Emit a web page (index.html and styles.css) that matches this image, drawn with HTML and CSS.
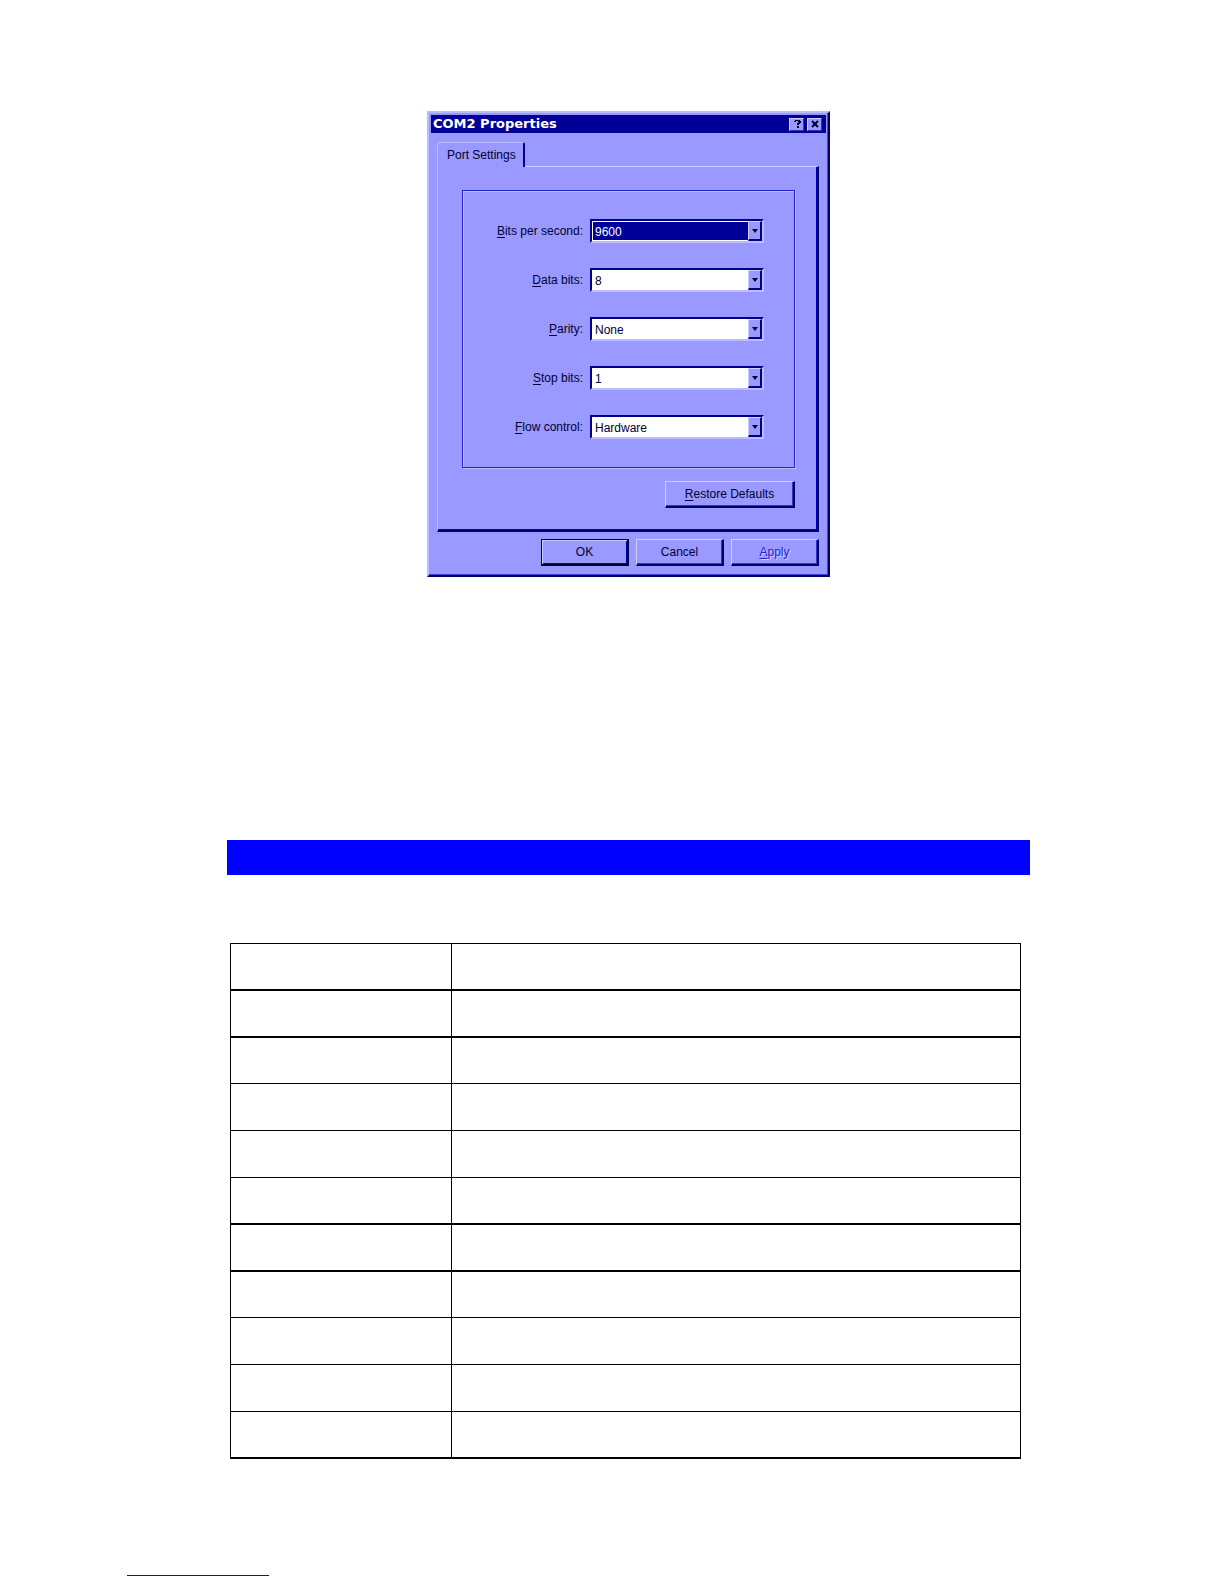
FILE: index.html
```html
<!DOCTYPE html>
<html lang="en">

<head>
    <meta charset="utf-8">
    <title>COM2 Properties</title>
    <link rel="stylesheet" href="styles.css">
</head>

<body>
    <main>
        <form class="dialog">
            <div class="title-bar">
                <h1>COM2 Properties</h1>
                <button type="button" class="title-button" aria-label="Help">
                    <svg viewBox="0 0 10 10" width="10" height="10">
                        <path d="M3 1h5v1h1v2H8v1H7v1H5V4h1V2H4v1H2V2h1zM5 7h2v2H5z" fill="#000033" />
                    </svg>
                </button>
                <button type="button" class="title-button" aria-label="Close">
                    <svg viewBox="0 0 10 10" width="10" height="10">
                        <path d="M2 2l6 6M8 2l-6 6" stroke="#000033" stroke-width="2" />
                    </svg>
                </button>
            </div>
            <div class="dialog-body">
                <button type="button" class="tab">Port Settings</button>
                <div class="panel">
                    <div class="settings">
                        <label for="bits-per-second"><u>B</u>its per second:</label>
                        <div class="combo selected">
                            <select id="bits-per-second"><option>9600</option></select>
                            <span class="arrow"></span>
                        </div>
                        <label for="data-bits"><u>D</u>ata bits:</label>
                        <div class="combo">
                            <select id="data-bits"><option>8</option></select>
                            <span class="arrow"></span>
                        </div>
                        <label for="parity"><u>P</u>arity:</label>
                        <div class="combo">
                            <select id="parity"><option>None</option></select>
                            <span class="arrow"></span>
                        </div>
                        <label for="stop-bits"><u>S</u>top bits:</label>
                        <div class="combo">
                            <select id="stop-bits"><option>1</option></select>
                            <span class="arrow"></span>
                        </div>
                        <label for="flow-control"><u>F</u>low control:</label>
                        <div class="combo">
                            <select id="flow-control"><option>Hardware</option></select>
                            <span class="arrow"></span>
                        </div>
                    </div>
                    <button type="reset" class="button restore"><u>R</u>estore Defaults</button>
                </div>
                <div class="actions">
                    <button type="submit" class="button default">OK</button>
                    <button type="button" class="button">Cancel</button>
                    <button type="button" class="button" disabled><u>A</u>pply</button>
                </div>
            </div>
        </form>

        <div class="banner"></div>

        <table class="grid">
            <tbody>
                <tr class="thick"><td></td><td></td></tr>
                <tr class="thick"><td></td><td></td></tr>
                <tr><td></td><td></td></tr>
                <tr><td></td><td></td></tr>
                <tr><td></td><td></td></tr>
                <tr class="thick"><td></td><td></td></tr>
                <tr class="thick"><td></td><td></td></tr>
                <tr><td></td><td></td></tr>
                <tr><td></td><td></td></tr>
                <tr><td></td><td></td></tr>
                <tr class="thick"><td></td><td></td></tr>
            </tbody>
        </table>
    </main>
    <footer>
        <a href="#" class="footer-link"></a>
    </footer>
</body>

</html>
```
FILE: styles.css
```css
* {
    box-sizing: border-box;
}

body {
    margin: 0;
    background-color: white;
    font-family: "Liberation Sans", Arial, sans-serif;
    font-size: 12px;
    line-height: 16px;
    color: #000033;
}

main {
    padding: 111px 194px 0 227px;
}

button,
select {
    font: inherit;
    color: inherit;
}

u {
    text-underline-offset: 2px;
}

/* dialog */

.dialog {
    max-width: 403px;
    margin: 0 auto;
    padding: 2px;
    background-color: #9999ff;
    border-style: solid;
    border-width: 2px;
    border-color: #bbbbff #000066 #000066 #bbbbff;
    box-shadow: inset -1px -1px #4444dd;
}

.title-bar {
    display: flex;
    align-items: center;
    gap: 3px;
    height: 18px;
    padding: 0 4px 0 2px;
    background-color: #000099;
}

.title-bar h1 {
    flex: 1;
    margin: 0;
    font-family: "DejaVu Sans", sans-serif;
    font-size: 13px;
    font-weight: bold;
    color: white;
}

.title-button {
    display: flex;
    align-items: center;
    justify-content: center;
    width: 15px;
    height: 13px;
    padding: 0;
    background-color: #9999ff;
    border: 1px solid;
    border-color: #ccccff #3333aa #3333aa #ccccff;
}

.dialog-body {
    padding: 9px 7px 7px 6px;
}

/* the tab covers the panel's top edge */
.tab {
    display: block;
    position: relative;
    height: 25px;
    margin-bottom: -1px;
    padding: 0 7px 0 9px;
    background-color: #9999ff;
    border-style: solid;
    border-width: 1px 2px 0 1px;
    border-color: #bbbbff #000099 #000099 #bbbbff;
    border-radius: 3px 2px 0 0;
}

.panel {
    padding: 23px 22px 22px 24px;
    border-style: solid;
    border-width: 1px 2px 2px 1px;
    border-color: #ccccff #000066 #000066 #bbbbff;
    box-shadow: inset -1px -1px #0000bb;
}

.settings {
    display: grid;
    grid-template-columns: 120px 174px;
    column-gap: 7px;
    row-gap: 25px;
    align-items: center;
    padding: 28px 0;
    border: 1px solid #2222dd;
    box-shadow: inset 1px 1px #bbbbff, 1px 1px #bbbbff;
}

.settings label {
    text-align: right;
}

.combo {
    position: relative;
    height: 24px;
    background-color: white;
    border-style: solid;
    border-width: 2px;
    border-color: #000088 #bbbbff #bbbbff #000088;
}

.combo select {
    display: block;
    appearance: none;
    width: 100%;
    height: 100%;
    padding: 1px 16px 0 3px;
    background-color: white;
    border: 0;
    border-radius: 0;
}

.combo.selected select {
    background-color: #000099;
    border: 1px solid white;
    padding-left: 2px;
    color: white;
}

.arrow {
    position: absolute;
    top: 0;
    right: 0;
    bottom: 0;
    display: flex;
    justify-content: center;
    align-items: center;
    width: 14px;
    background-color: #9999ff;
    border-style: solid;
    border-width: 1px 2px 2px 1px;
    border-color: #ccccff #000088 #000088 #ccccff;
    pointer-events: none;
}

.arrow::before {
    content: "";
    border: 3px solid transparent;
    border-top: 4px solid #000033;
    border-bottom: 0;
}

/* buttons */

.button {
    width: 88px;
    height: 27px;
    padding: 0;
    background-color: #9999ff;
    border-style: solid;
    border-width: 1px 2px 2px 1px;
    border-color: #ccccff #000066 #000066 #ccccff;
    box-shadow: inset -1px -1px #3333cc;
}

.button.default {
    border-color: #000033;
    box-shadow: inset 1px 1px #ccccff, inset -1px -1px #0000aa;
}

.button:disabled {
    color: #2222dd;
    text-shadow: 1px 1px #ccccff;
}

.restore {
    display: block;
    width: 130px;
    margin: 13px 0 0 auto;
}

.actions {
    display: flex;
    justify-content: flex-end;
    gap: 7px;
    margin-top: 7px;
}

/* banner and table */

.banner {
    height: 35px;
    margin-top: 263px;
    background-color: #0000ff;
}

.grid {
    width: calc(100% - 12px);
    margin: 68px 9px 0 3px;
    border-spacing: 0;
    border-top: 1px solid black;
    border-left: 1px solid black;
    table-layout: fixed;
}

.grid td {
    height: 47px;
    padding: 0;
    border-right: 1px solid black;
    border-bottom: 1px solid black;
}

.grid td:first-child {
    width: 28%;
}

.grid .thick td {
    border-bottom-width: 2px;
}

.grid .thick + tr:not(.thick) td {
    height: 46px;
}

footer {
    padding: 100px 127px 8px;
}

.footer-link {
    display: block;
    width: 142px;
    height: 17px;
    border-bottom: 1px solid #111199;
}
```
